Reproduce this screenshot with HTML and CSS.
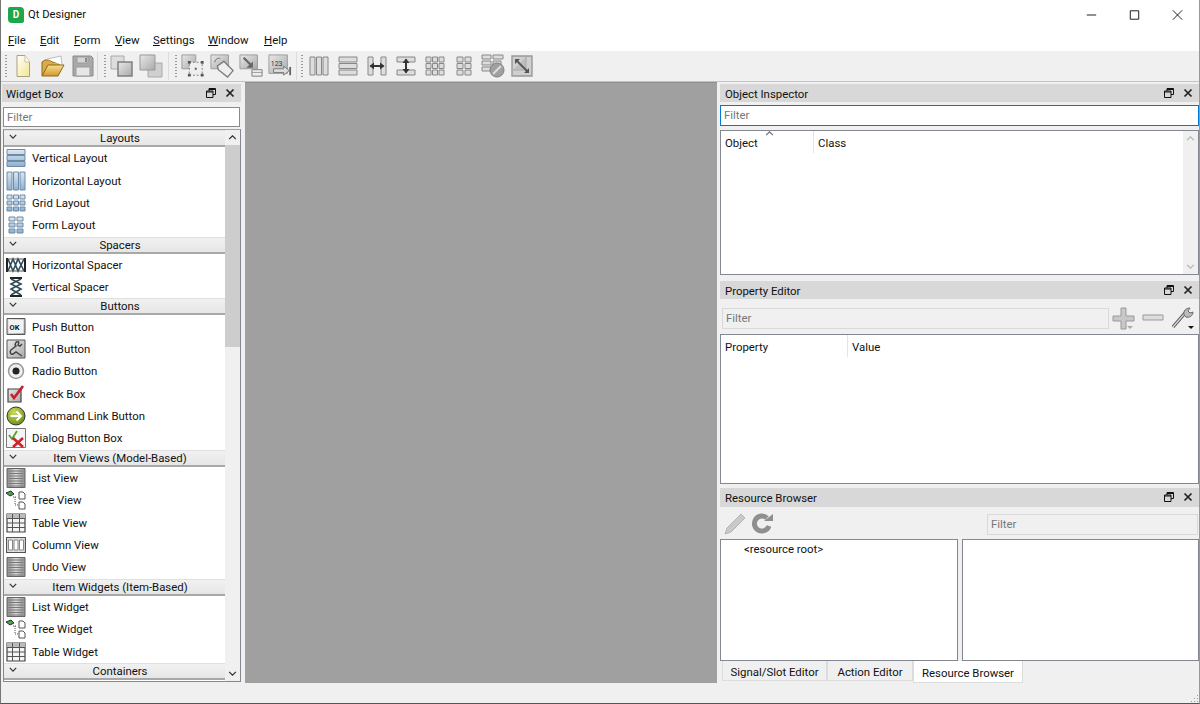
FILE: index.html
```html
<!DOCTYPE html>
<html lang="en">
<head>
<meta charset="utf-8">
<title>Qt Designer</title>
<link rel="stylesheet" href="styles.css">
</head>
<body>
<svg class="defs" xmlns="http://www.w3.org/2000/svg">
  <defs>
    <linearGradient id="gBlue" x1="0" y1="0" x2="0" y2="1"><stop offset="0" stop-color="#dbe8f4"/><stop offset="1" stop-color="#8fb0cf"/></linearGradient>
    <linearGradient id="gGray" x1="0" y1="0" x2="1" y2="1"><stop offset="0" stop-color="#e8e8e8"/><stop offset="1" stop-color="#aaa"/></linearGradient>
    <linearGradient id="gPanel" x1="0" y1="0" x2="1" y2="0"><stop offset="0" stop-color="#888"/><stop offset=".5" stop-color="#ddd"/><stop offset="1" stop-color="#888"/></linearGradient>
    <linearGradient id="gDoc" x1="0" y1="0" x2="1" y2="1"><stop offset="0" stop-color="#fff"/><stop offset="1" stop-color="#f3e58e"/></linearGradient>
    <linearGradient id="gFolder" x1="0" y1="0" x2="0" y2="1"><stop offset="0" stop-color="#f9dd8c"/><stop offset="1" stop-color="#d09a30"/></linearGradient>
    <radialGradient id="gGreen" cx=".4" cy=".3" r=".8"><stop offset="0" stop-color="#cddc5a"/><stop offset="1" stop-color="#5f8a10"/></radialGradient>

    <symbol id="t-new" viewBox="0 0 24 24"><path d="M6 1.500h8l4.500 6.500v14.500H6z" fill="url(#gDoc)" stroke="#a9a178"/><path d="M14 1.500v6.500h4.500" fill="#fff" stroke="#c9c298"/></symbol>
    <symbol id="t-open" viewBox="0 0 24 24"><path d="M1 22V8l3-2h5l2 2h7v3" fill="#d9ab49" stroke="#8d6a1e"/><path d="M6 5l14-3 1 9" fill="#fff" stroke="#bbb"/><path d="M1 22l6-11h16l-6 11z" fill="url(#gFolder)" stroke="#8d6a1e"/></symbol>
    <symbol id="t-save" viewBox="0 0 24 24"><path d="M2 2h18l2 2v18H2z" fill="#a9a9a9" stroke="#8a8a8a"/><path d="M6 3h11v6H6z" fill="#d5d5d5" stroke="#999"/><path d="M14 4h2v4h-2z" fill="#888"/><path d="M5 13h14v9H5z" fill="#e6e6e6" stroke="#999"/></symbol>
    <symbol id="t-front" viewBox="0 0 24 24"><path d="M1 2h13v13H1z" fill="#ddd" stroke="#aaa"/><path d="M8 8h14v14H8z" fill="url(#gGray)" stroke="#7f7f7f" stroke-width="1.500"/></symbol>
    <symbol id="t-back" viewBox="0 0 24 24"><path d="M9 9h14v14H9z" fill="#cfcfcf" stroke="#aaa"/><path d="M1 1h15v15H1z" fill="url(#gGray)" stroke="#999"/></symbol>
    <symbol id="t-edit" viewBox="0 0 26 26"><path d="M1 1h15v15H1z" fill="url(#gGray)" stroke="#999"/><path d="M9 9h14v14H9z" fill="#eee" stroke="#777" stroke-dasharray="2 2"/><path d="M7.500 7.500h3v3h-3zM21.500 7.500h3v3h-3zM7.500 21.500h3v3h-3zM21.500 21.500h3v3h-3zM15 15h2v2h-2z" fill="#555"/></symbol>
    <symbol id="t-signal" viewBox="0 0 26 26"><path d="M1 1h19v15H1z" fill="url(#gGray)" stroke="#999"/><path d="M8 13l7-5 10 10-6 7L9 17z" fill="#eee" stroke="#777" stroke-width="1.400"/><path d="M5 9c1-4 4-5 6-4" fill="none" stroke="#666"/></symbol>
    <symbol id="t-buddy" viewBox="0 0 26 26"><path d="M1 1h19v15H1z" fill="url(#gGray)" stroke="#999"/><path d="M14 17h11v7H14z" fill="#eee" stroke="#777"/><path d="M14 20h11" stroke="#999"/><path d="M5 4l9 9" stroke="#666" stroke-width="2.400"/><path d="M15 8v7H8z" fill="#666"/></symbol>
    <symbol id="t-tab" viewBox="0 0 26 26"><path d="M1 1h20v20H1z" fill="url(#gGray)" stroke="#999"/><text x="3" y="13" class="svgt">123</text><path d="M6 16h11v-3l6 5-6 5v-3H6z" fill="#ddd" stroke="#777"/><path d="M24 14v9" stroke="#666" stroke-width="2"/></symbol>
    <symbol id="t-h" viewBox="0 0 20 20"><path d="M1 1h5v18H1zM7.500 1h5v18h-5zM14 1h5v18h-5z" fill="#ddd" stroke="#888"/></symbol>
    <symbol id="t-v" viewBox="0 0 20 20"><path d="M1 1h18v5H1zM1 7.500h18v5H1zM1 14h18v5H1z" fill="#ddd" stroke="#888"/></symbol>
    <symbol id="t-sh" viewBox="0 0 20 20"><path d="M1 1h5v18H1zM14 1h5v18h-5z" fill="#ddd" stroke="#888"/><path d="M3.500 10h13" stroke="#333" stroke-width="2"/><path d="M7 6.500L2.500 10 7 13.500zM13 6.500l4.500 3.500-4.500 3.500z" fill="#333"/></symbol>
    <symbol id="t-sv" viewBox="0 0 20 20"><path d="M1 1h18v5H1zM1 14h18v5H1z" fill="#ddd" stroke="#888"/><path d="M10 3.500v13" stroke="#333" stroke-width="2"/><path d="M6.500 7L10 2.500 13.500 7zM6.500 13l3.500 4.500 3.500-4.500z" fill="#333"/></symbol>
    <symbol id="t-g" viewBox="0 0 20 20"><path d="M1 1h5v5H1zM7.500 1h5v5h-5zM14 1h5v5h-5zM1 7.500h5v5H1zM7.500 7.500h5v5h-5zM14 7.500h5v5h-5zM1 14h5v5H1zM7.500 14h5v5h-5zM14 14h5v5h-5z" fill="#ddd" stroke="#888"/></symbol>
    <symbol id="t-f" viewBox="0 0 20 20"><path d="M3 1h6v5H3zM11 1h6v5h-6zM3 7.500h6v5H3zM11 7.500h6v5h-6zM3 14h6v5H3zM11 14h6v5h-6z" fill="#ddd" stroke="#888"/></symbol>
    <symbol id="t-break" viewBox="0 0 24 24"><path d="M1 1h9v4H1zM12 1h10v4H12zM1 7h9v4H1zM12 7h8v4h-8zM1 13h9v4H1z" fill="#ddd" stroke="#888"/><circle cx="16" cy="16" r="7" fill="#a0a0a0" stroke="#808080"/><path d="M12 20l8-8" stroke="#ddd" stroke-width="2"/></symbol>
    <symbol id="t-adj" viewBox="0 0 24 24"><path d="M2 2h20v20H2z" fill="#cfcfcf" stroke="#999" stroke-width="1.400"/><path d="M3 16h13V3" fill="#bdbdbd" stroke="#aaa"/><path d="M6 6l12 12" stroke="#555" stroke-width="1.800"/><path d="M5 10V5h5zM19 14v5h-5z" fill="#555"/></symbol>

    <symbol id="l-v" viewBox="0 0 20 20"><path d="M1 1.500h18v5H1zM1 7.500h18v5H1zM1 13.500h18v5H1z" fill="url(#gBlue)" stroke="#6f8ba6"/></symbol>
    <symbol id="l-h" viewBox="0 0 20 20"><path d="M1 1h5v18H1zM7.500 1h5v18h-5zM14 1h5v18h-5z" fill="url(#gBlue)" stroke="#6f8ba6"/></symbol>
    <symbol id="l-g" viewBox="0 0 20 20"><path d="M1 2h5v4H1zM7.500 2h5v4h-5zM14 2h5v4h-5zM1 8h5v4H1zM7.500 8h5v4h-5zM14 8h5v4h-5zM1 14h5v4H1zM7.500 14h5v4h-5zM14 14h5v4h-5z" fill="url(#gBlue)" stroke="#6f8ba6"/></symbol>
    <symbol id="l-f" viewBox="0 0 20 20"><path d="M3 2h6v4H3zM11 2h6v4h-6zM3 8h6v4H3zM11 8h6v4h-6zM3 14h6v4H3zM11 14h6v4h-6z" fill="url(#gBlue)" stroke="#6f8ba6"/></symbol>
    <symbol id="l-hs" viewBox="0 0 20 20"><path d="M1 3v14M19 3v14" stroke="#222" stroke-width="2"/><path d="M2 4l5 12 5-12 6 12M2 16L7 4l5 12 6-12" fill="none" stroke="#2c4a58" stroke-width="1.600"/><path d="M2 4h16M2 16h16" stroke="#555"/></symbol>
    <symbol id="l-vs" viewBox="0 0 20 20"><path d="M4 1h12M4 19h12" stroke="#222" stroke-width="2"/><path d="M5 2l10 5-10 5 10 6M15 2L5 7l10 5-10 6" fill="none" stroke="#2c4a58" stroke-width="1.600"/></symbol>
    <symbol id="l-push" viewBox="0 0 20 20"><path d="M1 1.500h18v16H1z" fill="url(#gGray)" stroke="#555"/><path d="M2.500 3h15v13h-15z" fill="#f2f2f2"/><text x="3.500" y="12.500" class="svgo">OK</text></symbol>
    <symbol id="l-tool" viewBox="0 0 20 20"><path d="M1 1h18v18H1z" fill="url(#gGray)" stroke="#555"/><path d="M13 3c-3-1-5 2-3 4L5 11c-2 2 0 5 2 4l3-2 3 2 3 2M13 3l-1 3 2 1 2-2" fill="none" stroke="#444" stroke-width="1.500"/></symbol>
    <symbol id="l-radio" viewBox="0 0 20 20"><circle cx="10" cy="10" r="7.500" fill="#eee" stroke="#999" stroke-width="1.500"/><circle cx="10" cy="10" r="3.500" fill="#222"/></symbol>
    <symbol id="l-check" viewBox="0 0 20 20"><path d="M2 5h13v13H2z" fill="url(#gGray)" stroke="#444" stroke-width="1.200"/><path d="M5 10l3 4 9-12" fill="none" stroke="#c8202c" stroke-width="2.600"/></symbol>
    <symbol id="l-link" viewBox="0 0 20 20"><circle cx="10" cy="10" r="9" fill="url(#gGreen)" stroke="#333"/><path d="M4.500 10h10M10.500 5.500L15 10l-4.500 4.500" fill="none" stroke="#fff" stroke-width="2"/></symbol>
    <symbol id="l-dialog" viewBox="0 0 20 20"><path d="M.5.500h19v19H.500z" fill="#f4f4f4" stroke="#777"/><path d="M3 7l3 4 5-8" fill="none" stroke="#42a832" stroke-width="1.800"/><path d="M7 10l10 9M17 10L7 19" stroke="#d0202a" stroke-width="2.600"/></symbol>
    <symbol id="l-list" viewBox="0 0 20 20"><path d="M1 .5h18v19H1z" fill="url(#gPanel)" stroke="#666"/><path d="M3 3h14M3 5.500h14M3 8h14M3 10.500h14M3 13h14M3 15.500h14M3 18h14" stroke="#777" stroke-width="1"/></symbol>
    <symbol id="l-tree" viewBox="0 0 20 20"><path d="M0 3l5-2 3 3-4 2z" fill="#4da33c" stroke="#234"/><path d="M7 7h3M9 7v8M9 15h3" stroke="#555" stroke-dasharray="1 1"/><path d="M13 2h4l2 2v5h-6zM13 12h4l2 2v5h-6z" fill="#fff" stroke="#555"/></symbol>
    <symbol id="l-table" viewBox="0 0 20 20"><path d="M1 1h18v18H1z" fill="#f4f4f4" stroke="#444" stroke-width="1.200"/><path d="M1 1h18v4H1z" fill="#bbb"/><path d="M1 5.500h18M1 10h18M1 14.500h18M6.500 1v18M13.500 1v18" stroke="#555"/></symbol>
    <symbol id="l-col" viewBox="0 0 20 20"><path d="M.5 2.500h19v15H.500z" fill="#ddd" stroke="#555" stroke-width="1.200"/><path d="M2.500 5h4v10h-4zM8 5h4v10H8zM13.500 5h4v10h-4z" fill="#fff" stroke="#888"/></symbol>

    <symbol id="r-float" viewBox="0 0 10 10"><path d="M3 .5h6.500v6H7M3 .500V3M3 1.500h6.500" fill="none" stroke="#111"/><path d="M.5 3h6.500v6.500H.500zM.5 4h6.500" fill="none" stroke="#111"/></symbol>
    <symbol id="r-close" viewBox="0 0 10 10"><path d="M1.500 1.500l7 7M8.500 1.500l-7 7" stroke="#222" stroke-width="1.700"/></symbol>
    <symbol id="r-plus" viewBox="0 0 24 24"><path d="M9 2h5v8h8v5h-8v8H9v-8H1v-5h8z" fill="#c8c8c8" stroke="#999"/></symbol>
    <symbol id="r-minus" viewBox="0 0 24 24"><path d="M2 9h20v5H2z" fill="#ddd" stroke="#999"/></symbol>
    <symbol id="r-wrench" viewBox="0 0 24 24"><path d="M3 21L15 7" stroke="#555" stroke-width="3.400"/><path d="M3 21L15 7" stroke="#ddd" stroke-width="1.200"/><path d="M14 9c-1-4 2-7 6-7l-2 3 2 2 3-1c0 4-4 6-7 5z" fill="#bbb" stroke="#666"/></symbol>
    <symbol id="r-pencil" viewBox="0 0 24 24"><path d="M2 22l2-6L18 2l4 4L8 20z" fill="#c9c9c9" stroke="#b5b5b5"/></symbol>
    <symbol id="r-reload" viewBox="0 0 24 24"><path d="M19 14a7.500 7.500 0 1 1-2-8" fill="none" stroke="#8f8f8f" stroke-width="5"/><path d="M14 9h9V2z" fill="#8f8f8f"/></symbol>
    <symbol id="a-up" viewBox="0 0 10 6"><path d="M1 5l4-4 4 4" fill="none" stroke="#333" stroke-width="1.500"/></symbol>
    <symbol id="a-down" viewBox="0 0 10 6"><path d="M1 1l4 4 4-4" fill="none" stroke="#333" stroke-width="1.500"/></symbol>
  </defs>
</svg>

<div class="window">
  <header class="titlebar">
    <div class="app-logo">D</div>
    <div class="app-name">Qt Designer</div>
    <div class="win-btns">
      <svg class="win-btn" viewBox="0 0 46 30"><path d="M18 15h10" stroke="#111"/></svg>
      <svg class="win-btn" viewBox="0 0 46 30"><path d="M18.500 10.500h9v9h-9z" fill="none" stroke="#111"/></svg>
      <svg class="win-btn" viewBox="0 0 46 30"><path d="M18 10l10 10M28 10L18 20" stroke="#111"/></svg>
    </div>
  </header>

  <nav class="menubar">
    <span class="menu m-file"><u>F</u>ile</span>
    <span class="menu m-edit"><u>E</u>dit</span>
    <span class="menu m-form"><u>F</u>orm</span>
    <span class="menu m-view"><u>V</u>iew</span>
    <span class="menu m-settings"><u>S</u>ettings</span>
    <span class="menu m-window"><u>W</u>indow</span>
    <span class="menu m-help"><u>H</u>elp</span>
  </nav>

  <div class="toolbar">
    <div class="tgroup g1">
      <span class="handle"></span>
      <svg class="tb wide"><use href="#t-new"/></svg>
      <svg class="tb wide"><use href="#t-open"/></svg>
      <svg class="tb wide"><use href="#t-save"/></svg>
    </div>
    <div class="tgroup g2">
      <span class="handle"></span>
      <svg class="tb"><use href="#t-front"/></svg>
      <svg class="tb"><use href="#t-back"/></svg>
    </div>
    <div class="tgroup g3">
      <span class="handle"></span>
      <svg class="tb"><use href="#t-edit"/></svg>
      <svg class="tb"><use href="#t-signal"/></svg>
      <svg class="tb"><use href="#t-buddy"/></svg>
      <svg class="tb"><use href="#t-tab"/></svg>
    </div>
    <div class="tgroup g4">
      <span class="handle"></span>
      <svg class="tb sm"><use href="#t-h"/></svg>
      <svg class="tb sm"><use href="#t-v"/></svg>
      <svg class="tb sm"><use href="#t-sh"/></svg>
      <svg class="tb sm"><use href="#t-sv"/></svg>
      <svg class="tb sm"><use href="#t-g"/></svg>
      <svg class="tb sm"><use href="#t-f"/></svg>
      <svg class="tb"><use href="#t-break"/></svg>
      <svg class="tb"><use href="#t-adj"/></svg>
    </div>
  </div>

  <main class="main">
    <aside class="left">
      <div class="dock-title wb-title"><span>Widget Box</span><svg class="dk"><use href="#r-float"/></svg><svg class="dk"><use href="#r-close"/></svg></div>
      <div class="wb-filter"><div class="input">Filter</div></div>
      <div class="wb-body">
        <div class="wb-list">
          <div class="cat"><svg class="cat-a"><use href="#a-down"/></svg>Layouts</div>
          <div class="row"><svg class="ico"><use href="#l-v"/></svg>Vertical Layout</div>
          <div class="row"><svg class="ico"><use href="#l-h"/></svg>Horizontal Layout</div>
          <div class="row"><svg class="ico"><use href="#l-g"/></svg>Grid Layout</div>
          <div class="row"><svg class="ico"><use href="#l-f"/></svg>Form Layout</div>
          <div class="cat"><svg class="cat-a"><use href="#a-down"/></svg>Spacers</div>
          <div class="row"><svg class="ico"><use href="#l-hs"/></svg>Horizontal Spacer</div>
          <div class="row"><svg class="ico"><use href="#l-vs"/></svg>Vertical Spacer</div>
          <div class="cat"><svg class="cat-a"><use href="#a-down"/></svg>Buttons</div>
          <div class="row"><svg class="ico"><use href="#l-push"/></svg>Push Button</div>
          <div class="row"><svg class="ico"><use href="#l-tool"/></svg>Tool Button</div>
          <div class="row"><svg class="ico"><use href="#l-radio"/></svg>Radio Button</div>
          <div class="row"><svg class="ico"><use href="#l-check"/></svg>Check Box</div>
          <div class="row"><svg class="ico"><use href="#l-link"/></svg>Command Link Button</div>
          <div class="row"><svg class="ico"><use href="#l-dialog"/></svg>Dialog Button Box</div>
          <div class="cat"><svg class="cat-a"><use href="#a-down"/></svg>Item Views (Model-Based)</div>
          <div class="row"><svg class="ico"><use href="#l-list"/></svg>List View</div>
          <div class="row"><svg class="ico"><use href="#l-tree"/></svg>Tree View</div>
          <div class="row"><svg class="ico"><use href="#l-table"/></svg>Table View</div>
          <div class="row"><svg class="ico"><use href="#l-col"/></svg>Column View</div>
          <div class="row"><svg class="ico"><use href="#l-list"/></svg>Undo View</div>
          <div class="cat"><svg class="cat-a"><use href="#a-down"/></svg>Item Widgets (Item-Based)</div>
          <div class="row"><svg class="ico"><use href="#l-list"/></svg>List Widget</div>
          <div class="row"><svg class="ico"><use href="#l-tree"/></svg>Tree Widget</div>
          <div class="row"><svg class="ico"><use href="#l-table"/></svg>Table Widget</div>
          <div class="cat"><svg class="cat-a"><use href="#a-down"/></svg>Containers</div>
          <div class="row"><svg class="ico"><use href="#l-list"/></svg></div>
        </div>
        <div class="vbar">
          <svg class="bar-a"><use href="#a-up"/></svg>
          <div class="track"><div class="thumb"></div></div>
          <svg class="bar-a"><use href="#a-down"/></svg>
        </div>
      </div>
    </aside>

    <section class="center"></section>

    <aside class="right">
      <div class="dock-title oi-title"><span>Object Inspector</span><svg class="dk"><use href="#r-float"/></svg><svg class="dk"><use href="#r-close"/></svg></div>
      <div class="oi-filter"><div class="input focus">Filter</div></div>
      <div class="frame oi-tree">
        <div class="hdr oi-hdr">
          <div class="col c-object">Object<svg class="sort"><use href="#a-up"/></svg></div>
          <div class="col c-class">Class</div>
        </div>
        <div class="vbar faint">
          <svg class="bar-a"><use href="#a-up"/></svg>
          <div class="track"></div>
          <svg class="bar-a"><use href="#a-down"/></svg>
        </div>
      </div>

      <div class="dock-title pe-title"><span>Property Editor</span><svg class="dk"><use href="#r-float"/></svg><svg class="dk"><use href="#r-close"/></svg></div>
      <div class="pe-tools">
        <div class="input flat grow">Filter</div>
        <div class="pe-btn"><svg class="pe-ic"><use href="#r-plus"/></svg><i class="caret gray"></i></div>
        <div class="pe-btn"><svg class="pe-ic"><use href="#r-minus"/></svg></div>
        <div class="pe-btn"><svg class="pe-ic"><use href="#r-wrench"/></svg><i class="caret"></i></div>
      </div>
      <div class="frame pe-table">
        <div class="hdr pe-hdr">
          <div class="col c-prop">Property</div>
          <div class="col c-val">Value</div>
        </div>
      </div>

      <div class="dock-title rb-title"><span>Resource Browser</span><svg class="dk"><use href="#r-float"/></svg><svg class="dk"><use href="#r-close"/></svg></div>
      <div class="rb-tools">
        <svg class="rb-ic"><use href="#r-pencil"/></svg>
        <svg class="rb-ic"><use href="#r-reload"/></svg>
        <div class="input flat rb-filter">Filter</div>
      </div>
      <div class="rb-panes">
        <div class="frame rb-left"><div class="rb-root">&lt;resource root&gt;</div></div>
        <div class="frame rb-right"></div>
      </div>
      <div class="tabs">
        <div class="tab t1">Signal/Slot Editor</div>
        <div class="tab t2">Action Editor</div>
        <div class="tab active t3">Resource Browser</div>
      </div>
    </aside>
  </main>

  <footer class="status">
    <svg class="grip" viewBox="0 0 10 10"><path d="M8 2h1v1H8zM5 5h1v1H5zM8 5h1v1H8zM2 8h1v1H2zM5 8h1v1H5zM8 8h1v1H8z" fill="#999"/></svg>
  </footer>
</div>
</body>
</html>
```

FILE: styles.css
```css
* { box-sizing: border-box; }
html, body { margin: 0; padding: 0; height: 100%; overflow: hidden; background: #f0f0f0; }
body { font: 11.4px/16px Roboto, "Noto Sans", sans-serif; color: #111; }
.defs { display: block; width: 0; height: 0; overflow: hidden; }
.svgt { font: 7.5px Roboto, sans-serif; fill: #333; }
.svgo { font: bold 7.5px Roboto, sans-serif; fill: #111; }

.window { width: 1200px; height: 704px; display: flex; flex-direction: column; border-left: 1px solid #777; border-right: 1px solid #999; border-bottom: 1px solid #555; }

.titlebar { height: 30px; flex: none; background: #fff; display: flex; align-items: center; padding-left: 7px; }
.app-logo { width: 16px; height: 16px; background: #1ea64a; color: #fff; font: bold 10px/16px Roboto, sans-serif; text-align: center; border-radius: 2px 4px 2px 4px; }
.app-name { margin-left: 4px; font-size: 11.2px; flex: 1; }
.win-btns { display: flex; }
.win-btn { width: 43px; height: 30px; display: block; }

.menubar { height: 21px; flex: none; background: #fff; display: flex; align-items: center; padding-bottom: 1px; }
.menu { white-space: nowrap; }
.m-file { margin-left: 7px; width: 32px; }
.m-edit { width: 34px; }
.m-form { width: 41px; }
.m-view { width: 38px; }
.m-settings { width: 55px; }
.m-window { width: 56px; }

.toolbar { height: 31px; flex: none; background: #f0f0f0; border-bottom: 1px solid #c4c4c4; display: flex; align-items: center; }
.tgroup { display: flex; align-items: center; height: 28px; position: relative; border-right: 1px solid #dcdcdc; }
.g1 { width: 97px; padding-left: 7px; }
.g2 { width: 71px; padding-left: 9px; }
.g3 { width: 128px; padding-left: 9px; }
.g4 { flex: 1; border-right: 0; padding-left: 7px; }
.handle { width: 3px; height: 22px; margin-left: -3px; flex: none; background-image: linear-gradient(#999 1px, transparent 1px); background-size: 2px 3px; background-repeat: repeat-y; }
.tb { width: 24px; height: 24px; margin: 0 2.500px; flex: none; display: block; }
.tb.wide { margin: 0 3px; }
.tb.sm { width: 20px; height: 20px; margin: 0 4.500px; }

.main { flex: 1; min-height: 0; display: flex; }

.left { width: 240px; flex: none; display: flex; flex-direction: column; }
.center { flex: 1; background: #a0a0a0; margin: 0 3px 0 4px; border-top: 1px solid #8e8e8e; }
.right { width: 479px; flex: none; display: flex; flex-direction: column; }

.dock-title { height: 18px; flex: none; background: #d8d8d8; display: flex; align-items: center; padding: 1px 0 0 5px; }
.dock-title span { flex: 1; }
.dk { width: 10px; height: 10px; margin: -2px 9px 0 0; flex: none; }
.dk + .dk { margin-right: 6px; }

.wb-title { margin: 2px 0 0 1px; padding-left: 4px; }
.wb-filter { padding: 5px 1px 0 2px; flex: none; }
.input { height: 20px; background: #fff; border: 1px solid #8a8a8a; color: #777; padding-left: 3px; line-height: 18px; }
.input.focus { border-color: #0078d7; }
.input.flat { background: #f0f0f0; border-color: #d9d9d9; color: #777; }
.grow { flex: 1; }

.wb-body { flex: 1; min-height: 0; margin: 2px 0 1px 2px; border: 1px solid #828790; border-top-color: #a0a0a0; display: flex; background: #fff; }
.wb-list { flex: 1; min-width: 0; overflow: hidden; }
.cat { height: 17px; line-height: 15px; position: relative; text-align: center; background: linear-gradient(#f1f1f1, #e6e6e6); border-bottom: 2px solid #a8a8a8; border-top: 1px solid #e0e0e0; white-space: nowrap; padding-left: 11px; }
.cat-a { position: absolute; left: 5px; top: 3px; width: 8px; height: 5px; }
.row { height: 22.400px; display: flex; align-items: center; white-space: nowrap; padding-left: 2px; }
.ico { width: 20px; height: 20px; margin-right: 6px; flex: none; }

.vbar { width: 15px; flex: none; display: flex; flex-direction: column; background: #f0f0f0; }
.bar-a { width: 15px; height: 15px; flex: none; padding: 5px 3px; display: block; }
.track { flex: 1; }
.thumb { height: 202px; background: #cdcdcd; }
.faint .bar-a { opacity: .3; }

.oi-title { margin-top: 2px; }
.oi-filter { padding: 3px 0 0; flex: none; }
.oi-filter .input { height: 21px; }
.frame { border: 1px solid #828790; background: #fff; }
.oi-tree { height: 145px; flex: none; margin: 4px 0 0; display: flex; justify-content: space-between; }
.hdr { display: flex; height: 22px; flex: none; }
.oi-hdr { flex: 1; }
.col { position: relative; padding-left: 4px; line-height: 25px; border-right: 1px solid #e4e4e4; height: 22px; }
.c-object { width: 93px; }
.c-class { border-right: 0; }
.sort { position: absolute; left: 44px; top: 0; width: 9px; height: 5px; opacity: .7; }
.c-prop { width: 127px; }
.c-val { border-right: 0; }
.oi-tree .vbar { height: 100%; }

.pe-title { margin-top: 6px; }
.pe-tools { height: 35px; flex: none; display: flex; align-items: center; padding: 2px 3px 0 2px; }
.pe-tools .input { height: 21px; margin-top: 1px; }
.pe-btn { width: 29px; height: 24px; margin-top: 1px; position: relative; display: flex; justify-content: center; flex: none; }
.pe-ic { width: 24px; height: 24px; }
.caret { position: absolute; right: 2px; bottom: 1px; border: 3px solid transparent; border-top-color: #111; border-bottom: 0; }
.caret.gray { border-top-color: #aaa; right: 5px; }
.pe-table { height: 150px; flex: none; }

.rb-title { margin-top: 4px; height: 19px; }
.rb-tools { height: 32px; flex: none; display: flex; align-items: center; padding: 2px 0 0 3px; }
.rb-ic { width: 24px; height: 24px; margin-right: 3px; flex: none; }
.rb-filter { width: 211px; height: 21px; margin: 1px 1px 0 auto; }
.rb-panes { height: 122px; flex: none; display: flex; gap: 4px; }
.rb-left { width: 238px; flex: none; }
.rb-right { flex: 1; }
.rb-root { padding: 1px 0 0 23px; }

.tabs { flex: 1; display: flex; align-items: flex-start; padding-left: 2px; }
.tab { height: 20px; background: #f0f0f0; border: 1px solid #dcdcdc; border-top: 0; text-align: center; line-height: 22px; white-space: nowrap; }
.t1 { width: 105px; }
.t2 { width: 86px; }
.t3 { width: 110px; }
.tab.active { background: #fff; height: 22px; line-height: 24px; }

.status { height: 20px; flex: none; background: #f0f0f0; display: flex; justify-content: flex-end; align-items: flex-end; }
.grip { width: 10px; height: 10px; display: block; }
```
